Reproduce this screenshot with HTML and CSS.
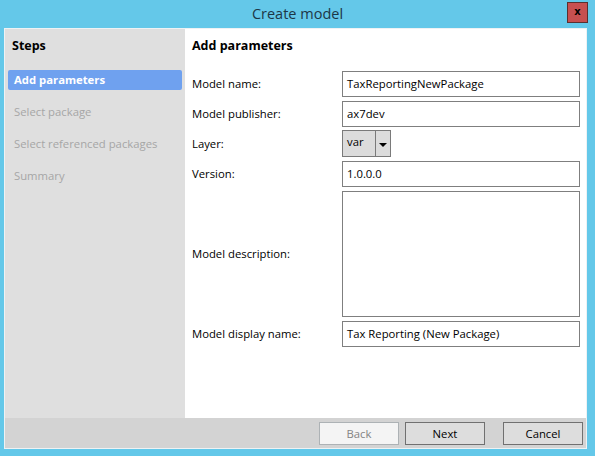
FILE: index.html
```html
<!DOCTYPE html>
<html lang="en">
<head>
  <meta charset="UTF-8" />
  <title>Create model</title>
  <link rel="stylesheet" href="styles.css">
</head>
<body>
  <div class="title-bar">
    <span></span>
    <div class="title">Create model</div>
    <button class="close-btn" title="Close">x</button>
  </div>

  <div class="client">
    <div class="main">
      <div class="steps">
        <div class="steps-header">Steps</div>
        <div class="step active">Add parameters</div>
        <div class="step">Select package</div>
        <div class="step">Select referenced packages</div>
        <div class="step">Summary</div>
      </div>

      <div class="page">
        <div class="page-header">Add parameters</div>
        <div class="form">
          <label>Model name:</label>
          <div class="field">TaxReportingNewPackage</div>

          <label>Model publisher:</label>
          <div class="field">ax7dev</div>

          <label>Layer:</label>
          <div class="combo">
            <span class="combo-value">var</span>
            <span class="combo-arrow"></span>
          </div>

          <label>Version:</label>
          <div class="field">1.0.0.0</div>

          <label>Model description:</label>
          <div class="field area"></div>

          <label>Model display name:</label>
          <div class="field">Tax Reporting (New Package)</div>
        </div>
      </div>
    </div>

    <div class="button-bar">
      <button class="btn" disabled>Back</button>
      <button class="btn">Next</button>
      <button class="btn cancel">Cancel</button>
    </div>
  </div>
</body>
</html>
```

FILE: styles.css
```css
body {
  margin: 0;
  padding: 0;
  width: 595px;
  height: 456px;
  background-color: #64c8e9;
  font-family: 'Segoe UI', 'Open Sans', sans-serif;
  font-size: 11.3px;
  color: #000;
  overflow: hidden;
}

/* Barra de titulo */
.title-bar {
  height: 28px;
  display: grid;
  grid-template-columns: 1fr auto 1fr;
  align-items: center;
}

.title {
  font-size: 14.5px;
  color: #1d3746;
  padding-bottom: 2px;
}

.close-btn {
  justify-self: end;
  margin-right: 7px;
  margin-bottom: 4px;
  width: 21px;
  height: 21px;
  padding: 0;
  background-color: #c75050;
  border: 1px solid #5a3030;
  color: #000;
  font-family: 'DejaVu Sans', sans-serif;
  font-weight: bold;
  font-size: 10px;
  line-height: 16px;
}

.client {
  margin-left: 4px;
  width: 581px;
  height: 419px;
  border: 1px solid #eef2f4;
  display: flex;
  flex-direction: column;
  background-color: #fff;
}

.main {
  flex: 1;
  display: flex;
}

/* Lista de passos */
.steps {
  width: 180px;
  background-color: #dfdfdf;
  padding: 8px 3px 0 3px;
  box-sizing: border-box;
}

.steps-header {
  font-weight: bold;
  font-size: 12.5px;
  padding-left: 4px;
  height: 33px;
}

.step {
  height: 20px;
  line-height: 19px;
  padding-left: 6px;
  margin-bottom: 12px;
  color: #a6a6a6;
}

.step.active {
  background-color: #6fa1ef;
  color: #fff;
  font-weight: bold;
  border-radius: 2px;
}

/* Pagina de parametros */
.page {
  flex: 1;
  padding: 8px 6px 0 7px;
}

.page-header {
  font-weight: bold;
  font-size: 12.5px;
  height: 34px;
}

.form {
  display: grid;
  grid-template-columns: 150px 1fr;
  grid-template-rows: 26px 26px 26px 26px 126px 26px;
  row-gap: 4px;
  align-items: center;
}

.form label {
  padding-bottom: 1px;
}

.field {
  height: 100%;
  box-sizing: border-box;
  border: 1px solid #7f7f7f;
  padding: 0 4px;
  line-height: 23px;
  background-color: #fff;
}

.combo {
  width: 49px;
  height: 27px;
  box-sizing: border-box;
  border: 1px solid #7a7a7a;
  background-color: #dcdcdc;
  display: flex;
  align-self: start;
  margin-top: -1px;
}

.combo-value {
  width: 28px;
  padding-left: 4px;
  line-height: 22px;
  border-right: 1px solid #7a7a7a;
}

.combo-arrow {
  flex: 1;
  display: flex;
  justify-content: center;
  align-items: center;
}

.combo-arrow::after {
  content: '';
  border-left: 4px solid transparent;
  border-right: 4px solid transparent;
  border-top: 4px solid #000;
  margin-top: 2px;
}

/* Botoes */
.button-bar {
  height: 30px;
  background-color: #d3d3d3;
  display: flex;
  justify-content: flex-end;
  align-items: center;
  padding-right: 3px;
  gap: 6px;
}

.btn {
  width: 80px;
  height: 23px;
  background-color: #dddddd;
  border: 1px solid #707070;
  font-family: inherit;
  font-size: 11.3px;
  color: #000;
  padding: 0;
}

.btn:disabled {
  background-color: #f4f4f4;
  border-color: #adb2b5;
  color: #838383;
}

.btn.cancel {
  margin-left: 12px;
}
```
